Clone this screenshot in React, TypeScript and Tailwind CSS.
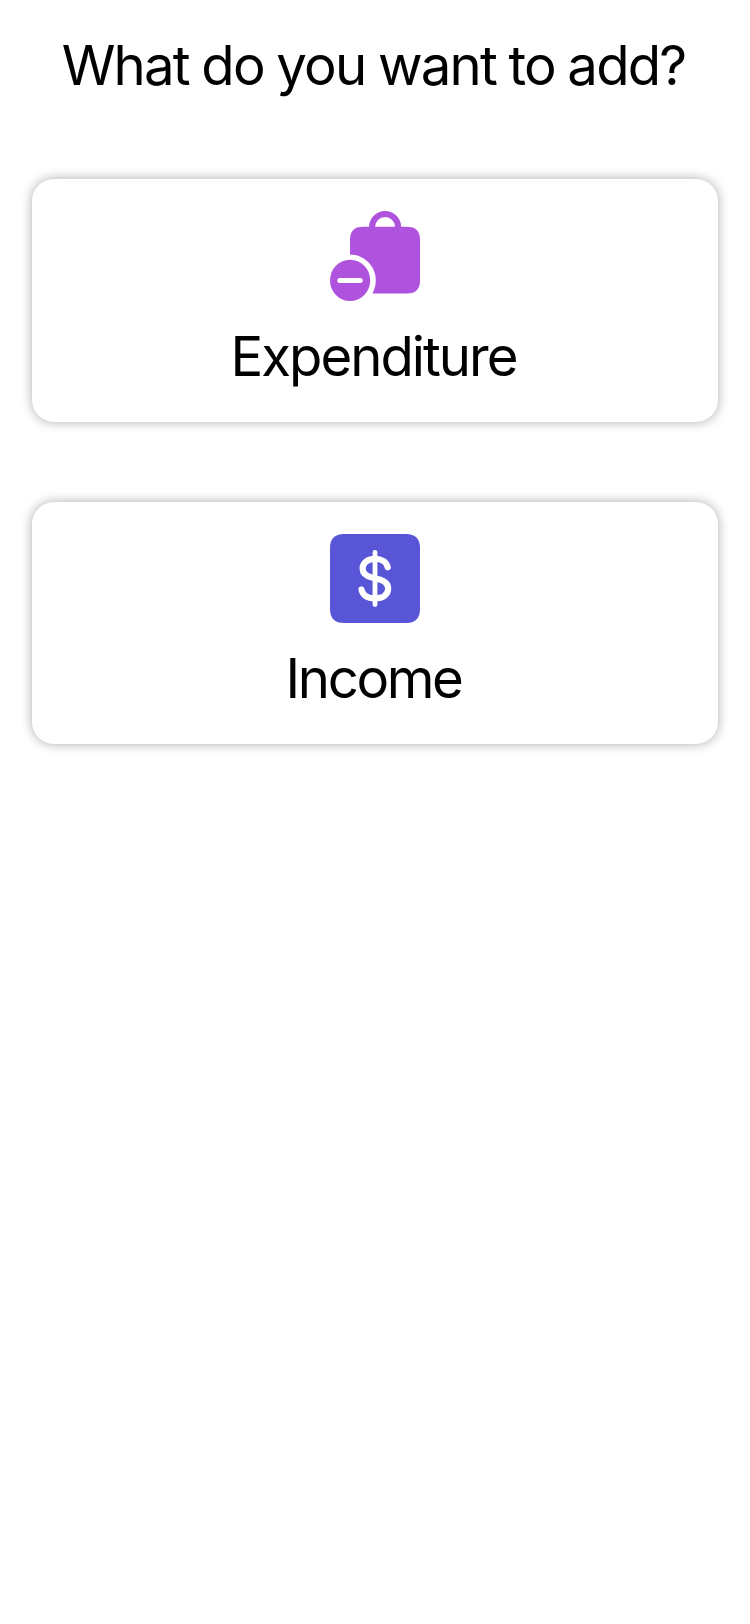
import type { ReactNode } from "react";

function ExpenditureIcon() {
  return (
    <svg width="90" height="90" viewBox="0 0 90 90" fill="none" className="block">
      <path d="M42 17V16.2a13.1 13.2 0 0 1 26.2 0V17" stroke="#AF52DE" strokeWidth="6" />
      <path
        d="M33 15.7H77Q90 15.7 90 28.7V69.7Q90 82.4 77 82.4H42.4A25.6 26 0 0 0 20 43.5V28.7Q20 15.7 33 15.7Z"
        fill="#AF52DE"
      />
      <ellipse cx="20.1" cy="69.4" rx="20.1" ry="20.6" fill="#AF52DE" />
      <path d="M9.8 69.5H30.2" stroke="#fff" strokeWidth="5" strokeLinecap="round" />
    </svg>
  );
}

function IncomeIcon() {
  return (
    <svg width="90" height="90" viewBox="0 0 90 90" fill="none" className="block">
      <path
        d="M14 0H76Q90 0 90 14V75Q90 89 76 89H14Q0 89 0 75V14Q0 0 14 0Z"
        fill="#5856D6"
      />
      <path d="M45 18.4V70.6" stroke="#fff" strokeWidth="4.8" strokeLinecap="round" />
      <path
        d="M57.7 33.3C56.5 28 51.7 24.9 45.2 24.9C37.8 24.9 32.6 28.7 32.6 34.6C32.6 40 36.3 42.2 42 43.6L47.6 44.9C54.6 46.5 58.2 49.2 58.2 54.6C58.2 60.8 53 64.4 45 64.4C37.6 64.4 32.8 61.2 31.5 55.6"
        stroke="#fff"
        strokeWidth="6.2"
        strokeLinecap="round"
      />
    </svg>
  );
}

function Choice({ icon, children }: { icon: ReactNode; children: ReactNode }) {
  return (
    <button
      type="button"
      className="flex w-full flex-col items-center rounded-[22px] bg-white pt-8 pb-[33px] shadow-[0_0_12px_rgba(0,0,0,0.33)]"
    >
      {icon}
      {children}
    </button>
  );
}

export default function App() {
  return (
    <main className="flex min-h-screen flex-col bg-white px-8 pt-8 font-['Inter',sans-serif] text-[54.5px] leading-[66px] font-[430] text-black">
      <h1 className="whitespace-nowrap pr-[3px] text-center tracking-[-1.8px] [word-spacing:-1px]">
        What do you want to add?
      </h1>
      <div className="mt-[81px] flex flex-col gap-20">
        <Choice icon={<ExpenditureIcon />}>
          <span className="mt-[22px] pr-[3px] tracking-[-2px]">Expenditure</span>
        </Choice>
        <Choice icon={<IncomeIcon />}>
          <span className="mt-[21px] pr-[3px] tracking-[-2.4px]">Income</span>
        </Choice>
      </div>
    </main>
  );
}
